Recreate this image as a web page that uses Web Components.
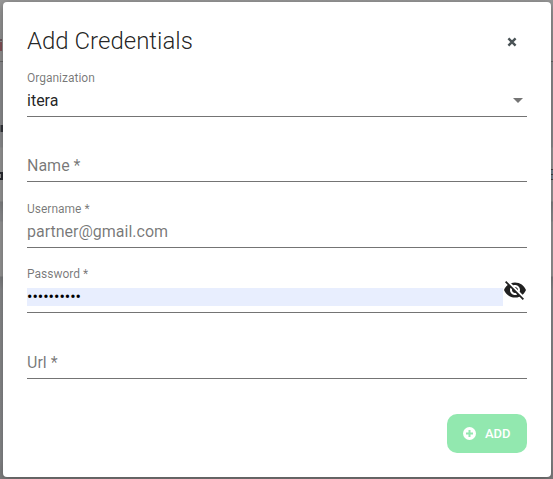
<!DOCTYPE html>
<html lang="en"><head><meta charset="utf-8"><title>Add Credentials</title>
<style>html,body{margin:0;height:100%;overflow:hidden}body{font-family:Roboto,sans-serif;background:#929292}</style></head>
<body>
<page-backdrop>
<credentials-dialog heading="Add Credentials">
<form-field label="Organization">itera<svg slot="end" width="10" height="5" viewBox="0 0 10 5" style="margin:0 4px 0 0"><path d="M0 0h10L5 5z" fill="#757575"/></svg></form-field>
<form-field class="empty">Name *</form-field>
<form-field label="Username *" class="muted">partner@gmail.com</form-field>
<password-field label="Password *"></password-field>
<form-field class="empty">Url *</form-field>
<add-button slot="actions">ADD</add-button>
</credentials-dialog>
</page-backdrop>
<script>
function define(name, html){
  customElements.define(name, class extends HTMLElement{
    connectedCallback(){
      if(this.shadowRoot) return;
      this.attachShadow({mode:'open'}).innerHTML=html;
      this.shadowRoot.querySelectorAll('[data-text]').forEach(e=>{e.textContent=this.getAttribute(e.dataset.text)||'';});
    }
  });
}
define('page-backdrop',`<style>
:host{display:block;box-sizing:border-box;width:553px;height:479px;padding:2px 2px 2px 3px;position:relative;
background:linear-gradient(#999 0,#929292 38px,#929292 61px,#696969 61px,#696969 62px,#8c8d8f 62px,#8c8d8f 147px,#979797 148px,#979797 201px,#808183 202px,#8c8d8f 215px,#8c8d8f 221px,#979797 222px,#979797 276px,#7c7d7f 277px,#8a8b8d 290px,#88898b 460px,#7d7d7d 479px)}
i{position:absolute;display:block}
</style>
<i style="left:0;top:39px;width:2px;height:2px;background:#6b5a60"></i><i style="left:0;top:42px;width:2px;height:9px;background:#835158"></i>
<i style="left:0;top:125px;width:3px;height:7px;background:linear-gradient(90deg,#646668 1px,#34363c 1px)"></i>
<i style="left:0;top:172px;width:3px;height:8px;border:solid #2b2c32;border-width:2px 2px 2px 0;box-sizing:border-box"></i>
<i style="left:551px;top:169px;width:2px;height:11px;background:repeating-linear-gradient(#444 0 1px,#718390 1px 5px)"></i>
<slot></slot>`);
define('credentials-dialog',`<style>
:host{display:flex;flex-direction:column;box-sizing:border-box;height:475px;padding:24px;background:#fff;border-radius:4px;position:relative;box-shadow:0 2px 8px #0005}
header{display:flex;justify-content:space-between;height:30px;align-items:center}
h1{font-size:24px;font-weight:300;line-height:30px;margin:0;color:rgba(0,0,0,.87)}
header svg{margin:1px 10px 0 0}
main{display:grid;grid-auto-rows:65.5px;height:328px;margin-top:-5px}
footer{display:flex;justify-content:flex-end;margin-top:35px}
</style><header><h1 data-text="heading"></h1><svg width="10" height="10" viewBox="0 0 10 10"><path d="M1.4 1.4 8.6 8.6M8.6 1.4 1.4 8.6" stroke="#4a5356" stroke-width="2.4"/></svg></header><main><slot></slot></main><footer><slot name="actions"></slot></footer>`);
const fieldStyle=`
:host{display:flex;flex-direction:column;justify-content:flex-end;box-sizing:border-box;height:65.5px;border-bottom:1px solid #747474;color:rgba(0,0,0,.87);font-size:16px}
label{font-size:12px;line-height:14px;color:rgba(0,0,0,.54)}
div{display:flex;align-items:center;justify-content:space-between;height:18px;line-height:18px;margin:7px 0 6px}
:host(.muted),:host(.empty){color:rgba(0,0,0,.54)}`;
define('form-field',`<style>${fieldStyle}</style><label data-text="label"></label><div><span><slot></slot></span><slot name="end"></slot></div>`);
define('password-field',`<style>${fieldStyle}
input{flex:1;min-width:0;box-sizing:border-box;height:18px;border:0;padding:0 0 2px;background:#e8eefe;color:#000;font:16px Roboto,sans-serif;outline:0}
svg{flex:none;margin-top:-14px}
</style><label data-text="label"></label><div><input type="password" value="0123456789" aria-label="Password"><svg width="24" height="24" viewBox="0 0 24 24" fill="#212121"><path d="M12 7c2.76 0 5 2.24 5 5 0 .65-.13 1.26-.36 1.83l2.92 2.92c1.51-1.26 2.7-2.89 3.43-4.75-1.73-4.39-6-7.5-11-7.5-1.4 0-2.74.25-3.98.7l2.16 2.16C10.74 7.13 11.35 7 12 7zM2 4.27l2.28 2.28.46.46C3.08 8.3 1.78 10.02 1 12c1.73 4.39 6 7.5 11 7.5 1.55 0 3.03-.3 4.38-.84l.42.42L19.73 22 21 20.73 3.27 3 2 4.27zM7.53 9.8l1.55 1.55c-.05.21-.08.43-.08.65 0 1.66 1.34 3 3 3 .22 0 .44-.03.65-.08l1.55 1.55c-.67.33-1.41.53-2.2.53-2.76 0-5-2.24-5-5 0-.79.2-1.53.53-2.2zm4.31-.78 3.15 3.15.02-.16c0-1.66-1.34-3-3-3l-.17.01z"/></svg></div>`);
define('add-button',`<style>
:host{display:flex;align-items:center;box-sizing:border-box;width:80px;height:39px;padding-left:16px;gap:9px;border-radius:10px;background:#92e8af;color:#fff;font-weight:500;font-size:13px}
</style><svg width="13" height="13" viewBox="0 0 13 13"><circle cx="6.5" cy="6.5" r="6.5" fill="#fff"/><path d="M6.5 3v7M3 6.5h7" stroke="#92e8af" stroke-width="2"/></svg><span><slot></slot></span>`);
</script>
</body></html>
